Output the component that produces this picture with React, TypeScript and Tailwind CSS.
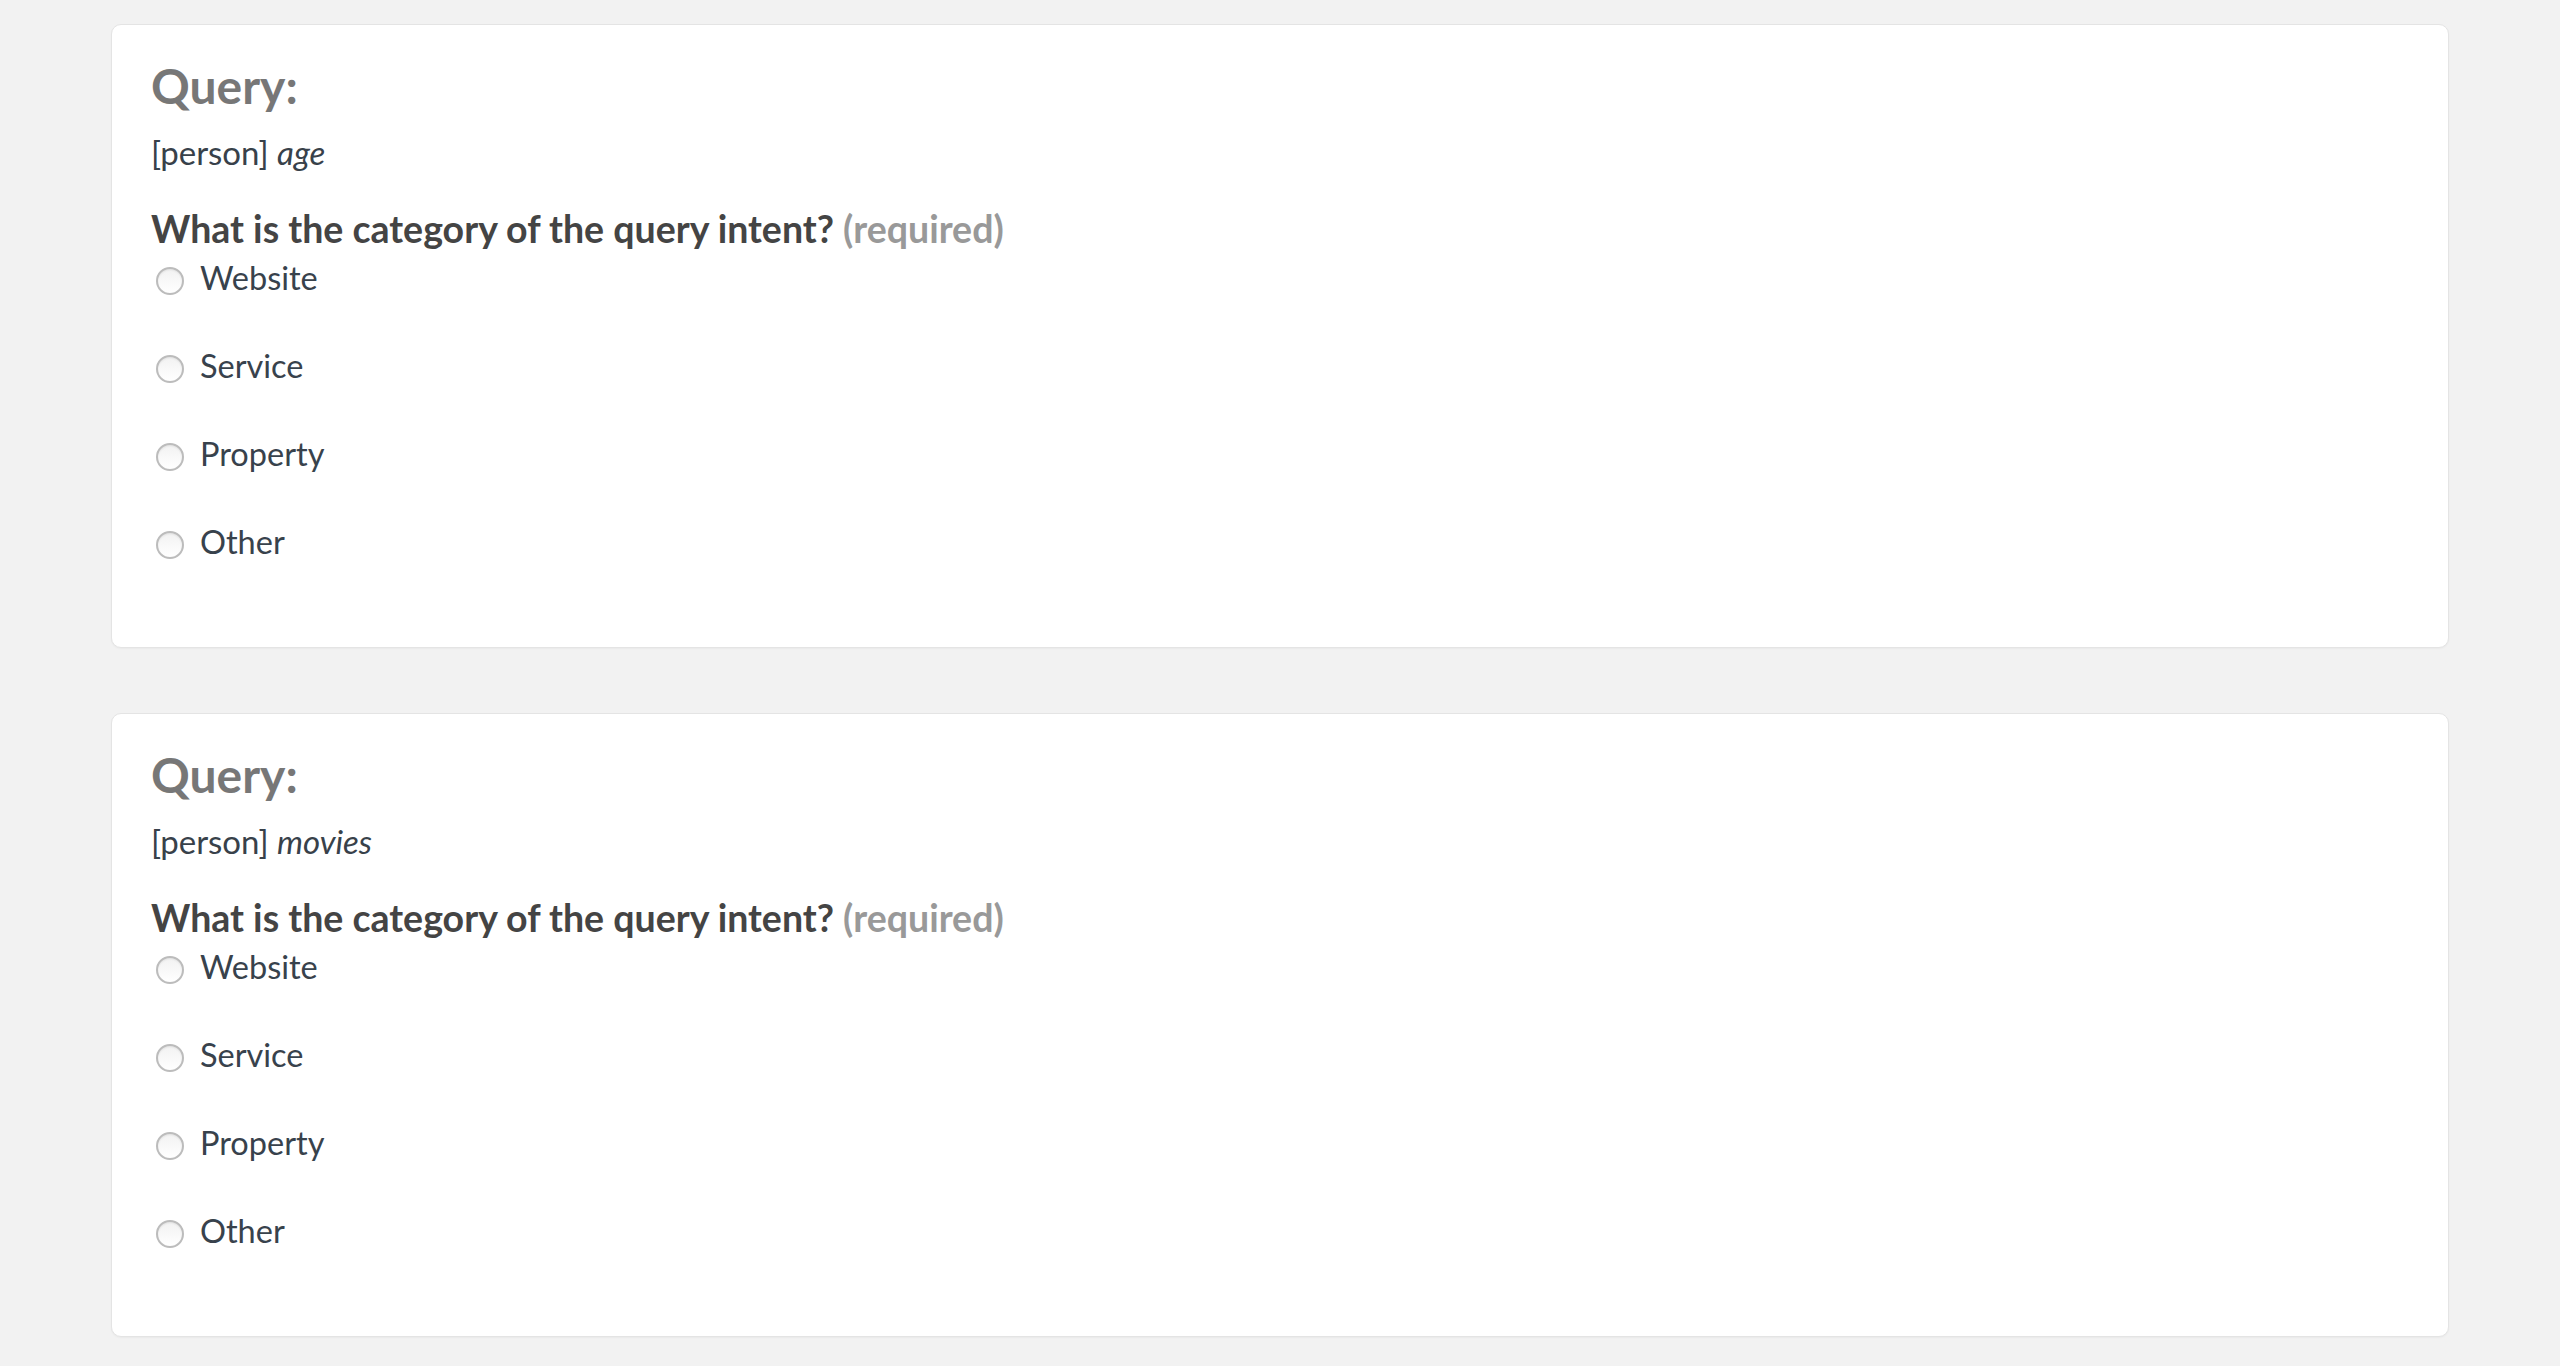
import React from "react";

const options = ["Website", "Service", "Property", "Other"];

function Radio() {
  return (
    <span className="mt-[11px] ml-[5px] block h-[28px] w-[28px] shrink-0 rounded-full border-2 border-[#bcbcbc] bg-gradient-to-b from-[#f2f2f2] to-white shadow-[inset_0_1px_2px_rgba(0,0,0,0.08)]" />
  );
}

function Card({ term }: { term: string }) {
  return (
    <div className="rounded-[10px] border border-[#e4e4e4] bg-white pl-[39px] pr-10 pt-9 pb-[83px] shadow-[0_1px_2px_rgba(0,0,0,0.04)]">
      <h3 className="text-[48px] font-bold leading-[50px] text-[#777777]">Query:</h3>
      <p className="mt-[21px] text-[33px] leading-[40px] text-[#38414a]">
        [person] <em className="italic">{term}</em>
      </p>
      <p className="mt-[35px] text-[37.5px] font-bold leading-[44px] text-[#444444]">
        What is the category of the query intent?{" "}
        <span className="text-[#999999]">(required)</span>
      </p>
      <div className="mt-[5px] flex flex-col gap-[44px]">
        {options.map((o) => (
          <label key={o} className="flex items-start gap-[16px]">
            <Radio />
            <span className="text-[32.5px] leading-[44px] text-[#38424c]">{o}</span>
          </label>
        ))}
      </div>
    </div>
  );
}

export default function App() {
  return (
    <div
      className="min-h-[1366px] bg-[#f2f2f2] pt-6"
      style={{ fontFamily: "Lato, 'Open Sans', sans-serif" }}
    >
      <div className="mx-auto flex w-[2338px] flex-col gap-[65px]">
        <Card term="age" />
        <Card term="movies" />
      </div>
    </div>
  );
}
